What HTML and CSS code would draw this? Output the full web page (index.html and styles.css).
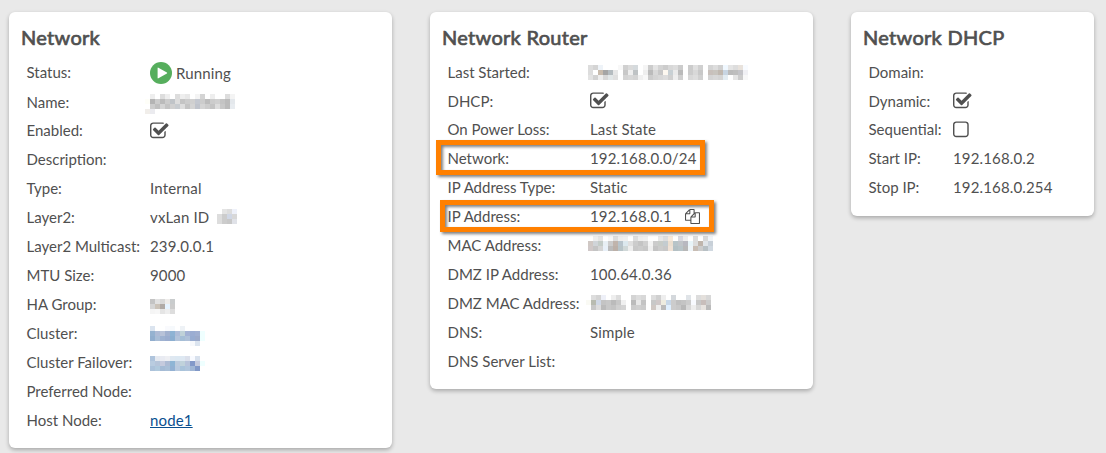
FILE: index.html
```html
<!DOCTYPE html>
<html lang="en"><head><meta charset="utf-8"><title>Network</title><link rel="stylesheet" href="styles.css"></head>
<body>
<svg class="defs" aria-hidden="true"><defs>
<symbol id="checked" viewBox="64 0 1728 1792"><path d="M1472 930v318q0 119-84.5 203.5t-203.5 84.500h-832q-119 0-203.5-84.500t-84.500-203.5v-832q0-119 84.500-203.500t203.500-84.500h832q63 0 117 25 15 7 18 23 3 17-9 29l-49 49q-10 10-23 10-3 0-9-2-23-6-45-6h-832q-66 0-113 47t-47 113v832q0 66 47 113t113 47h832q66 0 113-47t47-113v-254q0-13 9-22l64-64q10-10 23-10 6 0 12 3 20 8 20 29zm231-489l-814 814q-24 24-57 24t-57-24l-430-430q-24-24-24-57t24-57l110-110q24-24 57-24t57 24l263 263 647-647q24-24 57-24t57 24l110 110q24 24 24 57t-24 57z"/></symbol>
<symbol id="unchecked" viewBox="192 0 1728 1792"><path d="M1312 256h-832q-66 0-113 47t-47 113v832q0 66 47 113t113 47h832q66 0 113-47t47-113v-832q0-66-47-113t-113-47zm288 160v832q0 119-84.5 203.5t-203.5 84.5h-832q-119 0-203.5-84.5t-84.5-203.5v-832q0-119 84.5-203.5t203.5-84.5h832q119 0 203.5 84.5t84.5 203.5z"/></symbol>
<symbol id="copy" viewBox="0 0 1792 1792"><path d="M1696 384q40 0 68 28t28 68v1216q0 40-28 68t-68 28h-960q-40 0-68-28t-28-68v-288h-544q-40 0-68-28t-28-68v-672q0-40 20-88t48-76l408-408q28-28 76-48t88-20h416q40 0 68 28t28 68v328q68-40 128-40h416zm-544 213l-299 299h299v-299zm-640-384l-299 299h299v-299zm196 647l316-316v-416h-384v416q0 40-28 68t-68 28h-416v640h512v-256q0-40 20-88t48-76zm956 804v-1152h-384v416q0 40-28 68t-68 28h-416v640h896z"/></symbol>
</defs></svg>
<main class="board">
<section class="card network"><h2>Network</h2><dl>
<dt>Status:</dt><dd class="status"><svg class="play" viewBox="0 0 22 22"><circle cx="11" cy="11" r="11" fill="#56ae5d"/><path d="M7.600 6.200v9.600q0 .9.8.5l8.500-4.800q.7-.5 0-.9L8.400 5.700q-.8-.4-.8.5z" fill="#fff"/></svg><span>Running</span></dd>
<dt>Name:</dt><dd><svg class="mosaic name" data-rows="fff eee fff ddd eee fff ddd eee e8e8e8 fff f4f4f4 d4d4d4 fff eee fff fff ddd f4f4f4|fefef8 b4b4b4 ccc bbb ccc c0c4c8 ddd c4c4c4 ccc d0d0d0 c4c8d0 ccc bcbcbc ccc d0d0d0 c4c4c4 bbb e4e8ec|fff ccc c0c0c0 d4d4d4 c4c4c4 d0d0d0 c8ccd0 ddd c4c4c4 d4d4d4 c0c4cc d4d4d4 ccc c4c4c4 ddd c8c8c8 bbb e8ecf0|f1eeea ebebef"></svg></dd>
<dt>Enabled:</dt><dd><svg class="check"><use href="#checked"/></svg></dd>
<dt>Description:</dt><dd></dd>
<dt>Type:</dt><dd>Internal</dd>
<dt>Layer2:</dt><dd>vxLan ID<svg class="mosaic vxlan" data-rows="fff e4e4e4 ddd eef1fa|ddd ccc d0d7e5 d8d8d8|ddd ccc c8c8c8 e0e2e8"></svg></dd>
<dt>Layer2 Multicast:</dt><dd class="num">239.0.0.1</dd>
<dt>MTU Size:</dt><dd class="num">9000</dd>
<dt>HA Group:</dt><dd><svg class="mosaic ha" data-rows="c4c4c4 e2e2e2 d8d8d8 eeecea c9cccd|d5d5d5 cbc3b9 b0aaa6 e6f3ff ccc|f5f5f5 f7f7f7 e5e5e5 eee ddd"></svg></dd>
<dt>Cluster:</dt><dd><svg class="mosaic cluster" data-rows="dbe4ef fff fff f9fafd f6f9fc fff eef2f6|95b2d0 aebbd5 b8c2d8 a2b1cf 8eb3d4 aebdd8 bfd1d8 a3b2d4 9badd2 a0afd1 efffff|91aece a9bdd6 9fb2d1 9badcf 8cafd1 b2c3da a5bed6 aec0d8 97acd1 9caaca efffff|fff fff fff fff fff fff fff fff f7f9fc dbe4ef"></svg></dd>
<dt>Cluster Failover:</dt><dd><svg class="mosaic failover" data-rows="afc4dc e5e9f0 e9ebf2 eeeff3 dfe8f1 dce8f2 dee8f2 dbe0eb f8faff d8e1ed|b9cce0 b6c5da c5cadd adbbd4 8fb5d5 bdcbdd c0d2db b7c3da 8399c9 c4c9dd efffff|acc2da b0c9dd a5bbd5 a9bfd7 93b1d3 b9cadf a9c3da b0c5dc a0b6d5 8198c7"></svg></dd>
<dt>Preferred Node:</dt><dd></dd>
<dt>Host Node:</dt><dd><a href="#">node1</a></dd>
</dl></section>
<section class="card router"><h2>Network Router</h2><dl>
<dt>Last Started:</dt><dd><svg class="mosaic started" data-rows="ddd d4d4d4 eef3f8 fff fff fff f8f8f8 d0d0d0 dbdbdb d5dadd fff f5f5f5 ccc e4e4e4 d4d4d4 ccc d8d8d8 ddd ccc fff ccc e0e0e0 d0d0d0 fff d4d4d4 ddd d0d0d0 f0f8ff e5e5e5 ddd e8e2dc f8fbff|ddd fff c8bbad a5a5a5 b5bcc0 e7e7e7 fff c8c8c8 eee bfc3c5 fff eee bbb d8d8d8 c8c8c8 fdf8f0 c8d0d4 eaeaea bbb fff ccc d8d8d8 c8c8c8 fff c8c0bb c8c4be c0b8b0 c8d5e2 bbb bebebe c4c4c8 f0f0f4|e3e3e3 d2d2d2 eee d8d8d8 e2e7e8 e0e0e0 fff d4d4d4 d8d8d8 d4d4d4 f0f0f0 f8f8f8 ccc d4d4d4 d8d8d8 ddd d0d0d0 eee d0d0d0 fff d8d8d8 ddd d0d0d0 fff d4d4d4 d8d8d8 d4d4d4 e3ecf2 fff e5e5e5 ccc f8f8f8"></svg></dd>
<dt>DHCP:</dt><dd><svg class="check"><use href="#checked"/></svg></dd>
<dt>On Power Loss:</dt><dd>Last State</dd>
<dt>Network:</dt><dd class="num">192.168.0.0/24</dd>
<dt>IP Address Type:</dt><dd>Static</dd>
<dt>IP Address:</dt><dd class="num">192.168.0.1<svg class="copy"><use href="#copy"/></svg></dd>
<dt>MAC Address:</dt><dd><svg class="mosaic mac" data-rows="fff eee e4e4e4 fff f8f8f8 ddd eee f0f0f0 fff ddd eee f0f0f0 fff fff e8e8e8 ddd f5e9dc fff d8d8e0 eee fff ddd fff d8d8d8 f0f4f8|d0c8c4 d0d4d8 c4ccc8 e8eff4 ccc c0b4ac b8c4cc dce8ee e0e0e0 ccc c4c4c4 d0d0d0 f4f4f4 ccc c8ccc8 c4ccd0 ecdfd0 b8c4c8 c0c4c8 b8b8c0 e8f4f8 ddd bfb5ac e0e4e8 c8d0d8|d0c8c8 c4c4c4 d4d4d4 e8f0f8 bbb bcb0a8 b8c4c8 d0d8d8 eee c8c8c8 ccc c8c8c8 f0f0f0 c4c4c4 ccc c8c8c8 f0e2d6 b4c0c4 b8c4c8 b8b8b8 eef4f8 c8bdb4 ccc b8c0c4 d0d8e0"></svg></dd>
<dt>DMZ IP Address:</dt><dd class="num">100.64.0.36</dd>
<dt>DMZ MAC Address:</dt><dd><svg class="mosaic dmz" data-rows="fff ddd d4d4d4 eef0f8 fff eee ddd fff fff d4d4d4 ddd d8d8d8 fff ddd d0d0d0 eee fff d4d8dc fff fff e0e4e8 fff ddd e4e0dc d8d8d8|fafaf4 b8bbb0 d0d8e5 c4c4c4 c8c8c8 bbb c8c8c8 f0f0f0 fff bbb e8e8e8 c4c4c4 fff c8c8c8 d0c8c8 eeece0 c8d8e8 ccc c0c0c0 c4c4c4 ccc f8faff c8c8c8 c8bebb ccc|fff c8c8c8 ddd bbb c8c8c8 c4c4c4 d0d0d0 d4d4d4 fff ccc d0d0d0 ccc fff d0c8c4 eee bbb e0f0ff ccc c8c8c8 b8b8b8 d8d8d8 eee d8d8d8 e8e4e0 bbb"></svg></dd>
<dt>DNS:</dt><dd>Simple</dd>
<dt>DNS Server List:</dt><dd></dd>
</dl><div class="mark mark-network"></div><div class="mark mark-address"></div></section>
<section class="card dhcp"><h2>Network DHCP</h2><dl>
<dt>Domain:</dt><dd></dd>
<dt>Dynamic:</dt><dd><svg class="check"><use href="#checked"/></svg></dd>
<dt>Sequential:</dt><dd><svg class="check"><use href="#unchecked"/></svg></dd>
<dt>Start IP:</dt><dd class="num">192.168.0.2</dd>
<dt>Stop IP:</dt><dd class="num">192.168.0.254</dd>
</dl></section>
</main>
<script src="mosaic.js"></script>
</body></html>
```

FILE: mosaic.js
```js
// Paints each redacted value as a grid of 5px cells.
const CELL = 5;
document.querySelectorAll('.mosaic').forEach(svg => {
  const rows = svg.dataset.rows.split('|').map(row => row.split(' '));
  svg.setAttribute('width', CELL * Math.max(...rows.map(row => row.length)));
  svg.setAttribute('height', CELL * rows.length);
  rows.forEach((row, y) => row.forEach((color, x) => {
    const rect = document.createElementNS('http://www.w3.org/2000/svg', 'rect');
    const attrs = { x: x * CELL, y: y * CELL, width: CELL, height: CELL, fill: '#' + color };
    for (const key in attrs) rect.setAttribute(key, attrs[key]);
    svg.append(rect);
  }));
});
```

FILE: styles.css
```css
* { box-sizing: border-box; }
body { margin: 0; background: #e9e9e9; color: #505050; font: 15px/29px Lato, sans-serif; }
.defs { position: absolute; width: 0; height: 0; }
.board { display: flex; align-items: flex-start; gap: 38px; padding: 12px 0 0 9px; height: 453px; overflow: hidden; }
.card { background: #fff; border-radius: 6px; box-shadow: 0 2px 4px rgba(0,0,0,.28); padding: 12px 12px 13px; width: 383px; flex: none; }
.router { position: relative; }
.dhcp { width: 243px; min-height: 204px; }
h2 { margin: 0; height: 34px; font-size: 20px; line-height: 27px; font-weight: 400; letter-spacing: .3px; -webkit-text-stroke: .7px #505050; }
dl { margin: 0; padding-left: 5.5px; display: grid; grid-template: 29px 28px / 123.5px 1fr; grid-auto-rows: 29px; }
.network dl { grid-template-rows: 30px 28px; }
.router dl { grid-template-columns: 142.5px 1fr; }
.dhcp dl { grid-template-columns: 84.5px 1fr; }
dt, dd { margin: 0; white-space: nowrap; }
dd { display: flex; align-items: center; letter-spacing: .15px; }
.status { gap: 4px; }
.play { width: 22px; height: 22px; }
.check { width: 19.3px; height: 20px; fill: #505050; }
.copy { width: 15px; height: 15px; margin-left: 13px; fill: #505050; }
a { color: #0a4f8f; }
.mosaic { flex: none; align-self: flex-start; shape-rendering: crispEdges; }
.name { margin: 6px 0 0 -5px; }
.vxlan { margin: 6px 0 0 8px; }
.ha { margin-top: 9px; }
.cluster { margin-top: 7px; }
.failover { margin-top: 8px; }
.started { margin: 7px 0 0 -2px; }
.mac { margin: 5px 0 0 -2px; }
.dmz { margin: 6px 0 0 -4px; }
.mark { position: absolute; border: 5px solid #ff8000; filter: drop-shadow(2px 2px 1.5px rgba(0,0,0,.5)); }
.mark-network { left: 6px; top: 128px; width: 269px; height: 35px; }
.mark-address { left: 10px; top: 188px; width: 274px; height: 32px; }
```
